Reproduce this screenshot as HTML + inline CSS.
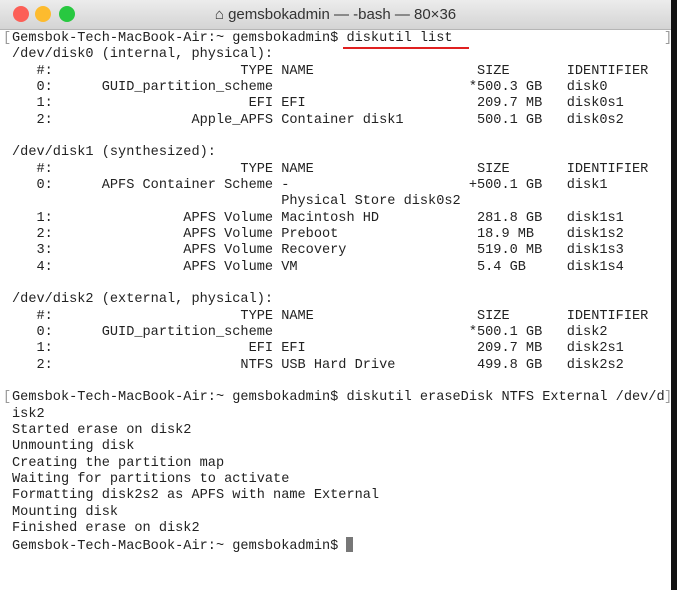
<!DOCTYPE html>
<html><head><style>
body{margin:0;width:677px;height:590px;overflow:hidden;background:#fff;position:relative;font-family:"Liberation Sans",sans-serif}
.tb{position:absolute;left:0;top:0;width:671px;height:29px;background:linear-gradient(#ececec,#d4d4d4);border-bottom:1px solid #b5b5b5}
.dot{position:absolute;top:6px;width:16px;height:16px;border-radius:50%}
.title{position:absolute;top:6px;left:0;width:671px;text-align:center;font-size:15px;color:#333}
.edge{position:absolute;right:0;top:0;width:6px;height:590px;background:#111}
pre{position:absolute;left:12px;top:31px;margin:0;font-family:"Liberation Mono",monospace;font-size:13.6px;line-height:16.33px;color:#222}
.br{position:absolute;font-family:"Liberation Mono",monospace;font-size:13.6px;color:#999}
.cur{display:inline-block;width:7px;height:15px;background:#777;vertical-align:-3px}
.ul{position:absolute;left:343px;top:47px;width:126px;height:2px;background:#e02020}
</style></head><body>
<div class="tb">
<div class="dot" style="left:13px;background:#fc5f57"></div>
<div class="dot" style="left:35px;background:#fdbb2e"></div>
<div class="dot" style="left:59px;background:#28c840"></div>
<div class="title">⌂ gemsbokadmin — -bash — 80×36</div>
</div>
<div class="edge"></div>
<div class="br" style="left:3px;top:31px">[</div>
<div class="br" style="left:664px;top:31px">]</div>
<div class="br" style="left:3px;top:390px">[</div>
<div class="br" style="left:664px;top:390px">]</div>
<div class="ul"></div>
<pre>Gemsbok-Tech-MacBook-Air:~ gemsbokadmin$ diskutil list
/dev/disk0 (internal, physical):
   #:                       TYPE NAME                    SIZE       IDENTIFIER
   0:      GUID_partition_scheme                        *500.3 GB   disk0
   1:                        EFI EFI                     209.7 MB   disk0s1
   2:                 Apple_APFS Container disk1         500.1 GB   disk0s2

/dev/disk1 (synthesized):
   #:                       TYPE NAME                    SIZE       IDENTIFIER
   0:      APFS Container Scheme -                      +500.1 GB   disk1
                                 Physical Store disk0s2
   1:                APFS Volume Macintosh HD            281.8 GB   disk1s1
   2:                APFS Volume Preboot                 18.9 MB    disk1s2
   3:                APFS Volume Recovery                519.0 MB   disk1s3
   4:                APFS Volume VM                      5.4 GB     disk1s4

/dev/disk2 (external, physical):
   #:                       TYPE NAME                    SIZE       IDENTIFIER
   0:      GUID_partition_scheme                        *500.1 GB   disk2
   1:                        EFI EFI                     209.7 MB   disk2s1
   2:                       NTFS USB Hard Drive          499.8 GB   disk2s2

Gemsbok-Tech-MacBook-Air:~ gemsbokadmin$ diskutil eraseDisk NTFS External /dev/d
isk2
Started erase on disk2
Unmounting disk
Creating the partition map
Waiting for partitions to activate
Formatting disk2s2 as APFS with name External
Mounting disk
Finished erase on disk2
Gemsbok-Tech-MacBook-Air:~ gemsbokadmin$ <span class="cur"></span></pre>
</body></html>
